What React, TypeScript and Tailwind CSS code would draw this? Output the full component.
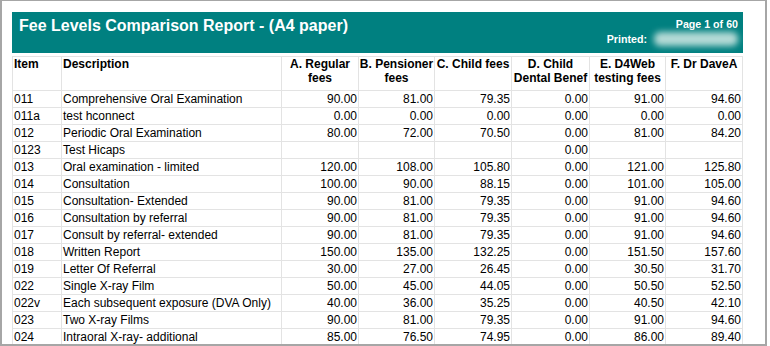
import React from "react";

type Row = [string, string, string, string, string, string, string, string];

const rows: Row[] = [
  ["011", "Comprehensive Oral Examination", "90.00", "81.00", "79.35", "0.00", "91.00", "94.60"],
  ["011a", "test hconnect", "0.00", "0.00", "0.00", "0.00", "0.00", "0.00"],
  ["012", "Periodic Oral Examination", "80.00", "72.00", "70.50", "0.00", "81.00", "84.20"],
  ["0123", "Test Hicaps", "", "", "", "0.00", "", ""],
  ["013", "Oral examination - limited", "120.00", "108.00", "105.80", "0.00", "121.00", "125.80"],
  ["014", "Consultation", "100.00", "90.00", "88.15", "0.00", "101.00", "105.00"],
  ["015", "Consultation- Extended", "90.00", "81.00", "79.35", "0.00", "91.00", "94.60"],
  ["016", "Consultation by referral", "90.00", "81.00", "79.35", "0.00", "91.00", "94.60"],
  ["017", "Consult by referral- extended", "90.00", "81.00", "79.35", "0.00", "91.00", "94.60"],
  ["018", "Written Report", "150.00", "135.00", "132.25", "0.00", "151.50", "157.60"],
  ["019", "Letter Of Referral", "30.00", "27.00", "26.45", "0.00", "30.50", "31.70"],
  ["022", "Single X-ray Film", "50.00", "45.00", "44.05", "0.00", "50.50", "52.50"],
  ["022v", "Each subsequent exposure (DVA Only)", "40.00", "36.00", "35.25", "0.00", "40.50", "42.10"],
  ["023", "Two X-ray Films", "90.00", "81.00", "79.35", "0.00", "91.00", "94.60"],
  ["024", "Intraoral X-ray- additional", "85.00", "76.50", "74.95", "0.00", "86.00", "89.40"],
];

const headers: string[][] = [
  ["A. Regular", "fees"],
  ["B. Pensioner", "fees"],
  ["C. Child fees"],
  ["D. Child", "Dental Benef"],
  ["E. D4Web", "testing fees"],
  ["F. Dr DaveA"],
];

const cell = "border-l border-t border-[#e3e3e3]";

export default function App() {
  return (
    <div
      className="w-[770px] h-[346px] bg-white"
      style={{ fontFamily: '"Liberation Sans", Arial, sans-serif' }}
    >
      <div className="w-[767px] h-[346px] overflow-hidden border-t border-l-2 border-r-2 border-b-2 border-[#a6a6a6] bg-white pl-[10px] pt-[11px]">
        {/* Header bar */}
        <div className="w-[731px] h-[41px] bg-[#008080] flex justify-between text-white">
          <div className="pl-[7px] pt-[5px] text-[16px] font-bold leading-[18px]">
            Fee Levels Comparison Report - (A4 paper)
          </div>
          <div className="flex flex-col items-end pr-[5px] pt-[6px] text-[10.67px] font-bold leading-[12px]">
            <div>Page 1 of 60</div>
            <div className="flex items-center h-[17px]">
              <span>Printed:</span>
              <div className="ml-[7px] w-[84px] h-[14px] rounded-md bg-[#b4dad6] blur-[3px]" />
            </div>
          </div>
        </div>

        {/* Table */}
        <div className="mt-[3px] w-[731px] border-r border-b border-[#e3e3e3] grid grid-cols-[49px_220px_77px_76px_77px_78px_76px_77px] text-[12px] text-black">
          <div className={`${cell} h-[34px] pl-px font-bold leading-[14px]`}>Item</div>
          <div className={`${cell} h-[34px] pl-px font-bold leading-[14px]`}>Description</div>
          {headers.map((h, i) => (
            <div
              key={i}
              className={`${cell} h-[34px] font-bold leading-[14px] text-center whitespace-nowrap overflow-visible`}
            >
              {h.map((line, j) => (
                <div key={j}>{line}</div>
              ))}
            </div>
          ))}
          {rows.map((r, ri) => (
            <React.Fragment key={ri}>
              <div className={`${cell} h-[17px] pl-px leading-[16px] whitespace-nowrap`}>{r[0]}</div>
              <div className={`${cell} h-[17px] pl-px leading-[16px] whitespace-nowrap`}>{r[1]}</div>
              {r.slice(2).map((v, ci) => (
                <div key={ci} className={`${cell} h-[17px] pr-px leading-[16px] text-right`}>
                  {v}
                </div>
              ))}
            </React.Fragment>
          ))}
        </div>
      </div>
    </div>
  );
}
